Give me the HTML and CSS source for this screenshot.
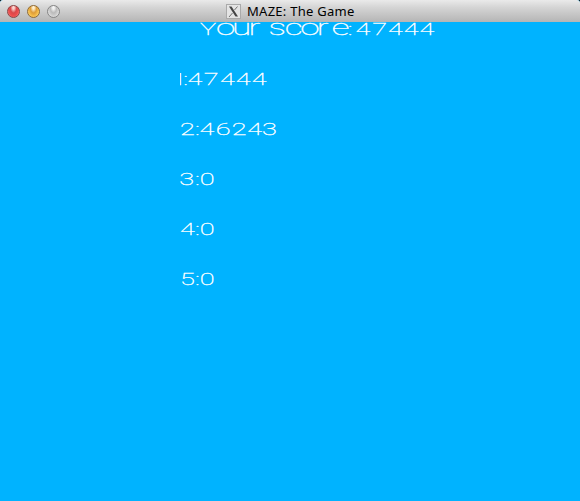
FILE: index.html
```html
<!DOCTYPE html>
<html lang="en">
<head>
<meta charset="utf-8">
<title>MAZE: The Game</title>
<link rel="stylesheet" href="styles.css">
</head>
<body>
<div class="window">
  <header class="titlebar">
    <div class="controls"><i class="light red"></i><i class="light amber"></i><i class="light gray"></i></div>
    <svg class="appicon" viewBox="0 0 15 15"><rect x=".5" y=".5" width="14" height="14" fill="#e4e4e4" stroke="#aaa"/><path d="M3 2.5h2.5L12 12.5H9.5z" fill="#444"/><path d="M11.5 2.5L8.5 6M6.5 9L3 13" stroke="#666" stroke-width=".9"/></svg>
    <h1 class="title">MAZE: The Game</h1>
  </header>
  <main class="board">
    <svg class="heading" viewBox="0 0 150 25" preserveAspectRatio="none"><text y="13" x="0 10 20 30.3 38 42.8 53 62.7 73 82.3"><tspan>Y</tspan><tspan class="low">our score</tspan><tspan x="92.3 96 97.2 107.7 117.5 127.3 137.2">: 47444</tspan></text></svg>
    <ol class="scores">
      <li><svg class="score" viewBox="0 0 75 20" preserveAspectRatio="none"><text y="13" x="-5.2 2 4.7 14.9 25 34.8 44.8">1:47444</text></svg></li>
      <li><svg class="score" viewBox="0 0 75 20" preserveAspectRatio="none"><text y="13" x="0 9.3 12.2 22.3 32.3 42 51.2">2:46243</text></svg></li>
      <li><svg class="score" viewBox="0 0 75 20" preserveAspectRatio="none"><text y="13" x="-.5 9.3 12.4">3:0</text></svg></li>
      <li><svg class="score" viewBox="0 0 75 20" preserveAspectRatio="none"><text y="13" x="0 9.3 12.4">4:0</text></svg></li>
      <li><svg class="score" viewBox="0 0 75 20" preserveAspectRatio="none"><text y="13" x="0 9.3 12.4">5:0</text></svg></li>
    </ol>
  </main>
</div>
</body>
</html>
```

FILE: styles.css
```css
body { margin: 0; background: #000; }
.window { display: flex; flex-direction: column; width: 580px; height: 501px; overflow: hidden; border-radius: 3px 3px 0 0; background: #00b3ff; }
.titlebar { display: flex; align-items: flex-start; height: 22px; box-sizing: border-box; background: linear-gradient(#eaeaea, #d4d4d4 35%, #b5b5b5); }
.controls { display: flex; gap: 7px; width: 219px; padding: 5px 0 0 7px; }
.light { width: 13px; height: 13px; box-sizing: border-box; border-radius: 50%; border: 1px solid #777; }
.red { border-color: #8c4545; background: radial-gradient(ellipse at 50% 15%, #fbd5d0 0 10%, #d9484a 40%, #ee4e4e 65%, #ffb0a8); }
.amber { border-color: #8f6a35; background: radial-gradient(ellipse at 50% 15%, #fff0cf 0 10%, #dd9c38 40%, #f6bd4b 65%, #fff0a0); }
.gray { border-color: #858585; background: radial-gradient(ellipse at 50% 15%, #f4f4f4 0 10%, #bababa 40%, #d2d2d2 65%, #f4f4f4); }
.appicon { width: 15px; height: 15px; margin-top: 4px; }
.title { margin: 0 0 0 6px; font: 400 13px/22px "Noto Sans", sans-serif; letter-spacing: .27px; color: #000; white-space: nowrap; }
.board { flex: 1; overflow: hidden; }
.heading { display: block; width: 240px; height: 25px; margin-left: 200px; }
.scores { list-style: none; margin: 0; padding: 25px 0 0 180px; }
.scores li { height: 50px; }
.score { display: block; width: 120px; height: 20px; }
text { font-family: Roboto, sans-serif; font-size: 17px; font-weight: 100; fill: #fff; stroke: #fff; stroke-width: .3px; }
.low { font-size: 22px; }
```
